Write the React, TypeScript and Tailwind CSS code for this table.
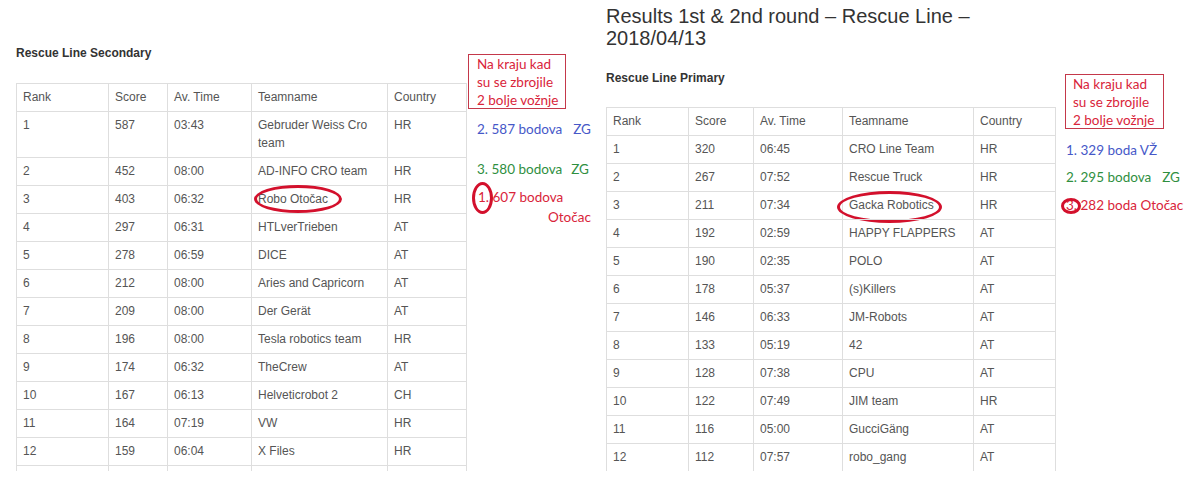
import React from 'react';

type Row = [string, string, string, string, string];

const secondary: Row[] = [
  ['1', '587', '03:43', 'Gebruder Weiss Cro team', 'HR'],
  ['2', '452', '08:00', 'AD-INFO CRO team', 'HR'],
  ['3', '403', '06:32', 'Robo Otočac', 'HR'],
  ['4', '297', '06:31', 'HTLverTrieben', 'AT'],
  ['5', '278', '06:59', 'DICE', 'AT'],
  ['6', '212', '08:00', 'Aries and Capricorn', 'AT'],
  ['7', '209', '08:00', 'Der Gerät', 'AT'],
  ['8', '196', '08:00', 'Tesla robotics team', 'HR'],
  ['9', '174', '06:32', 'TheCrew', 'AT'],
  ['10', '167', '06:13', 'Helveticrobot 2', 'CH'],
  ['11', '164', '07:19', 'VW', 'HR'],
  ['12', '159', '06:04', 'X Files', 'HR'],
];

const primary: Row[] = [
  ['1', '320', '06:45', 'CRO Line Team', 'HR'],
  ['2', '267', '07:52', 'Rescue Truck', 'HR'],
  ['3', '211', '07:34', 'Gacka Robotics', 'HR'],
  ['4', '192', '02:59', 'HAPPY FLAPPERS', 'AT'],
  ['5', '190', '02:35', 'POLO', 'AT'],
  ['6', '178', '05:37', '(s)Killers', 'AT'],
  ['7', '146', '06:33', 'JM-Robots', 'AT'],
  ['8', '133', '05:19', '42', 'AT'],
  ['9', '128', '07:38', 'CPU', 'AT'],
  ['10', '122', '07:49', 'JIM team', 'HR'],
  ['11', '116', '05:00', 'GucciGäng', 'AT'],
  ['12', '112', '07:57', 'robo_gang', 'AT'],
];

const header: Row = ['Rank', 'Score', 'Av. Time', 'Teamname', 'Country'];
const filler: Row = ['\u00a0', '\u00a0', '\u00a0', '\u00a0', '\u00a0'];

interface TableProps {
  cols: string;
  rows: Row[];
  circledRow: number;
  ellipse: string;
}

function ResultsTable({ cols, rows, circledRow, ellipse }: TableProps) {
  const all = [header, ...rows, filler];
  return (
    <div className={`grid ${cols}`}>
      {all.map((row, r) =>
        row.map((value, c) => (
          <div
            key={`${r}-${c}`}
            className={`relative border-t border-l border-[#dedede] pl-[6px] pr-[4px] pt-[4px] pb-[5px] text-[12px] leading-[18px] ${
              c === 4 ? 'border-r' : ''
            }`}
          >
            {value}
            {/* hand-drawn ring around the team name */}
            {r === circledRow + 1 && c === 3 && (
              <span className={`absolute rounded-[50%] border-[3px] border-[#d3102c] ${ellipse}`} />
            )}
          </div>
        ))
      )}
    </div>
  );
}

export default function App() {
  return (
    <div className="w-[1186px] h-[490px] bg-white flex overflow-hidden font-['Liberation_Sans',Arial,sans-serif] text-[#555]">
      {/* Left: secondary */}
      <div className="w-[605px] shrink-0 flex pl-[16px]">
        <div className="w-[451px] shrink-0 pt-[44px]">
          <h3 className="text-[12px] leading-[18px] font-bold text-[#333]">Rescue Line Secondary</h3>
          <div className="mt-[21px] h-[388px] overflow-hidden">
            <ResultsTable
              cols="grid-cols-[92px_59px_84px_136px_80px]"
              rows={secondary}
              circledRow={2}
              ellipse="left-[2px] top-[-1px] w-[88px] h-[28px]"
            />
          </div>
        </div>
        <div className="w-[138px] shrink-0 pt-[54px] font-['Lato',sans-serif] text-[13.5px] leading-[18px] whitespace-nowrap">
          <div className="ml-[1px] w-[98px] h-[55px] border border-[#c4384a] pl-[8px] text-[#d9243a]">
            Na kraju kad
            <br />
            su se zbrojile
            <br />
            2 bolje vožnje
          </div>
          <div className="mt-[11px] pl-[10px] text-[#4658c8]">
            2. 587 bodova<span className="ml-[11px]">ZG</span>
          </div>
          <div className="mt-[22px] pl-[10px] text-[#2f8f3f]">
            3. 580 bodova<span className="ml-[9px]">ZG</span>
          </div>
          <div className="mt-[10px] pl-[11px] text-[#d9243a]">
            <span className="relative inline-block leading-[18px]">
              1.
              <span className="absolute left-[-6px] top-[-6px] w-[21px] h-[32px] rounded-[50%] border-[3px] border-[#d3102c]" />
            </span>{' '}
            607 bodova
          </div>
          <div className="mt-[2px] pl-[81px] text-[#d9243a]">Otočac</div>
        </div>
      </div>

      {/* Right: primary */}
      <div className="flex pl-[1px]">
        <div className="w-[450px] shrink-0 pt-[5px]">
          <h2 className="text-[20px] leading-[22px] font-normal text-[#333]">
            Results 1st &amp; 2nd round – Rescue Line –
            <br />
            2018/04/13
          </h2>
          <h3 className="mt-[20px] text-[12px] leading-[18px] font-bold text-[#333]">Rescue Line Primary</h3>
          <div className="mt-[20px] h-[364px] overflow-hidden">
            <ResultsTable
              cols="grid-cols-[82px_65px_89px_131px_83px]"
              rows={primary}
              circledRow={2}
              ellipse="left-[-6px] top-[-1px] w-[105px] h-[32px]"
            />
          </div>
        </div>
        <div className="w-[130px] shrink-0 pt-[74px] pl-[9px] font-['Lato',sans-serif] text-[13.5px] leading-[18px] whitespace-nowrap">
          <div className="w-[99px] h-[55px] border border-[#c4384a] pl-[7px] text-[#d9243a]">
            Na kraju kad
            <br />
            su se zbrojile
            <br />
            2 bolje vožnje
          </div>
          <div className="mt-[12px] pl-[1px] text-[#4658c8]">1. 329 boda VŽ</div>
          <div className="mt-[9px] pl-[1px] text-[#2f8f3f]">
            2. 295 bodova<span className="ml-[11px]">ZG</span>
          </div>
          <div className="mt-[10px] pl-[1px] text-[#d9243a]">
            <span className="relative inline-block leading-[18px]">
              3.
              <span className="absolute left-[-5px] top-[2px] w-[20px] h-[16px] rounded-[50%] border-[3px] border-[#d3102c]" />
            </span>{' '}
            282 boda Otočac
          </div>
        </div>
      </div>
    </div>
  );
}
